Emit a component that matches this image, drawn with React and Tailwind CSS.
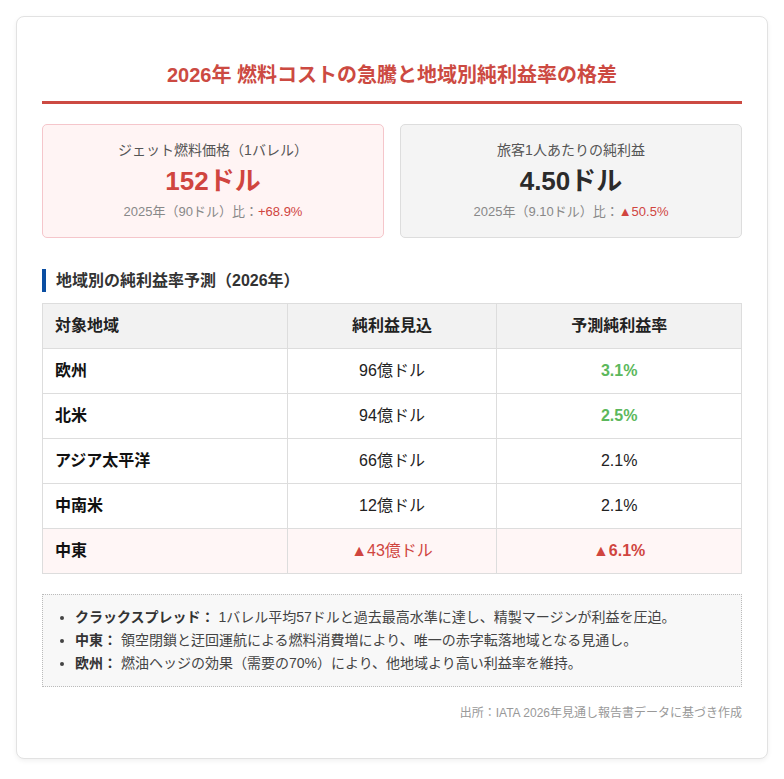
import React from 'react';

const regions = [
    { name: '欧州', profit: '96億ドル', margin: '3.1%', tone: 'good' },
    { name: '北米', profit: '94億ドル', margin: '2.5%', tone: 'good' },
    { name: 'アジア太平洋', profit: '66億ドル', margin: '2.1%', tone: 'plain' },
    { name: '中南米', profit: '12億ドル', margin: '2.1%', tone: 'plain' },
    { name: '中東', profit: '▲43億ドル', margin: '▲6.1%', tone: 'bad' },
];

const notes = [
    { label: 'クラックスプレッド：', text: '1バレル平均57ドルと過去最高水準に達し、精製マージンが利益を圧迫。' },
    { label: '中東：', text: '領空閉鎖と迂回運航による燃料消費増により、唯一の赤字転落地域となる見通し。' },
    { label: '欧州：', text: '燃油ヘッジの効果（需要の70%）により、他地域より高い利益率を維持。' },
];

const StatCard = ({ label, value, base, change, accent }) => (
    <div
        className={
            accent
                ? 'flex-1 rounded-[5px] border border-[#f5c6cb] bg-[#fff4f4] p-[15px] text-center'
                : 'flex-1 rounded-[5px] border border-[#dddddd] bg-[#f4f4f4] p-[15px] text-center'
        }
    >
        <div className="text-[14px] leading-[21px] text-[#555]">{label}</div>
        <div className={accent ? 'mt-[5px] text-[26px] leading-[31px] font-bold text-[#d0453f]' : 'mt-[5px] text-[26px] leading-[31px] font-bold text-[#2b2b2b]'}>
            {value}
        </div>
        <div className="mt-[5px] text-[13px] leading-[20px] text-[#888]">
            {base}
            <span className="text-[#d0453f]">{change}</span>
        </div>
    </div>
);

export default function App() {
    return (
        <div className="min-h-screen bg-white p-4" style={{ fontFamily: '"Liberation Sans", "Noto Sans CJK JP", sans-serif' }}>
            <div className="mx-auto max-w-[752px] rounded-lg border border-[#e2e2e2] bg-white px-[25px] pt-[25px] pb-[36px] shadow-[0_2px_5px_rgba(0,0,0,0.06)]">
                {/* heading */}
                <h2 className="mt-[18px] border-b-[3px] border-[#cc4a42] pb-[11px] text-center text-[20px] leading-[30px] font-bold text-[#cc4a42]">
                    2026年 燃料コストの急騰と地域別純利益率の格差
                </h2>

                {/* stat cards */}
                <div className="mt-[20px] flex gap-4">
                    <StatCard accent label="ジェット燃料価格（1バレル）" value="152ドル" base="2025年（90ドル）比：" change="+68.9%" />
                    <StatCard label="旅客1人あたりの純利益" value="4.50ドル" base="2025年（9.10ドル）比：" change="▲50.5%" />
                </div>

                {/* region table */}
                <h3 className="mt-[31px] border-l-4 border-[#0b4ea2] pl-[10px] text-[16px] leading-[23px] font-bold text-[#333]">
                    地域別の純利益率予測（2026年）
                </h3>
                <table className="mt-[11px] w-full border-collapse text-[16px] leading-6">
                    <thead>
                        <tr className="bg-[#f2f2f2]">
                            <th className="w-[35%] border border-[#dddddd] px-3 py-[10px] text-left font-bold text-[#222]">対象地域</th>
                            <th className="w-[30%] border border-[#dddddd] px-3 py-[10px] text-center font-bold text-[#222]">純利益見込</th>
                            <th className="w-[35%] border border-[#dddddd] px-3 py-[10px] text-center font-bold text-[#222]">予測純利益率</th>
                        </tr>
                    </thead>
                    <tbody>
                        {regions.map(r => (
                            <tr key={r.name} className={r.tone === 'bad' ? 'bg-[#fff6f6]' : 'bg-white'}>
                                <td className="border border-[#dddddd] px-3 py-[10px] font-bold text-[#111]">{r.name}</td>
                                <td className={r.tone === 'bad' ? 'border border-[#dddddd] px-3 py-[10px] text-center text-[#d0453f]' : 'border border-[#dddddd] px-3 py-[10px] text-center text-[#222]'}>
                                    {r.profit}
                                </td>
                                <td
                                    className={
                                        r.tone === 'good'
                                            ? 'border border-[#dddddd] px-3 py-[10px] text-center font-bold text-[#5cb85c]'
                                            : r.tone === 'bad'
                                            ? 'border border-[#dddddd] px-3 py-[10px] text-center font-bold text-[#d0453f]'
                                            : 'border border-[#dddddd] px-3 py-[10px] text-center text-[#222]'
                                    }
                                >
                                    {r.margin}
                                </td>
                            </tr>
                        ))}
                    </tbody>
                </table>

                {/* notes */}
                <div className="mt-5 border border-dotted border-[#bbbbbb] bg-[#f8f8f8] px-[15px] py-[11px]">
                    <ul className="list-disc pl-[17px] text-[14px] leading-[23px] text-[#444]">
                        {notes.map(n => (
                            <li key={n.label}>
                                <strong className="text-[#333]">{n.label}</strong> {n.text}
                            </li>
                        ))}
                    </ul>
                </div>

                <p className="mt-[17px] text-right text-[12px] leading-[18px] text-[#999]">出所：IATA 2026年見通し報告書データに基づき作成</p>
            </div>
        </div>
    );
}
